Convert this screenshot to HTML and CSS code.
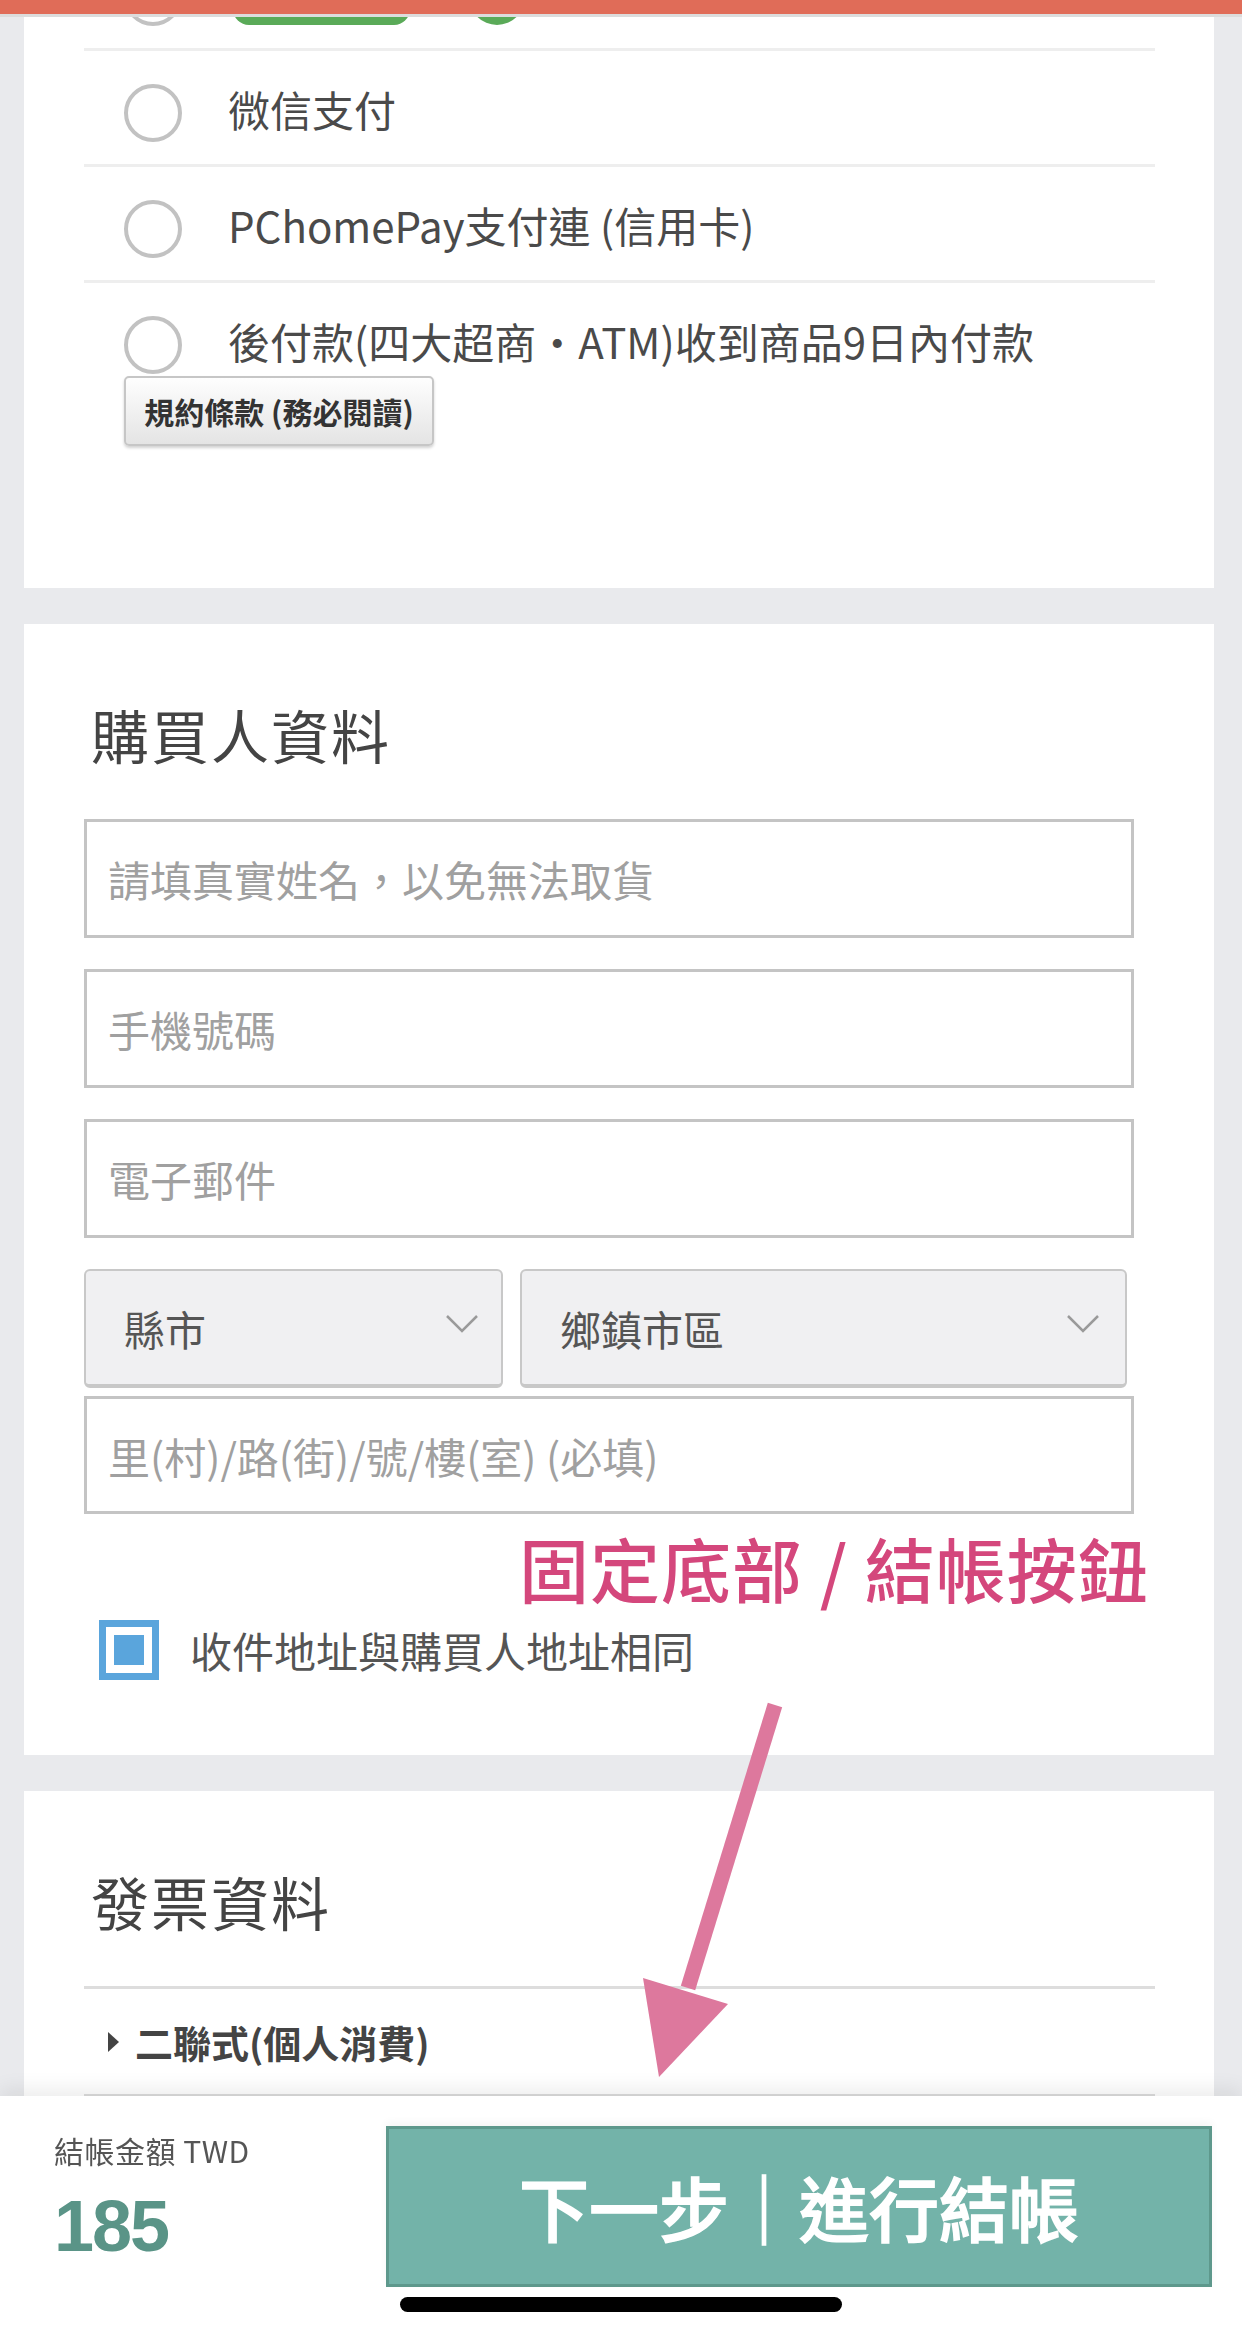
FILE: index.html
```html
<!DOCTYPE html>
<html lang="zh-Hant">
<head>
<meta charset="utf-8">
<title>結帳</title>
<link rel="stylesheet" href="styles.css">
</head>
<body>
<div class="statusbar"></div>

<main class="page">
  <section class="card card-pay">
    <div class="pay-list">
      <div class="pay-row">
        <span class="radio"></span>
        <span class="logo-pill"></span>
        <span class="logo-dot"></span>
      </div>
      <div class="pay-row">
        <span class="radio"></span>
        <span class="pay-label">微信支付</span>
      </div>
      <div class="pay-row">
        <span class="radio"></span>
        <span class="pay-label">PChomePay支付連 (信用卡)</span>
      </div>
      <div class="pay-row last">
        <span class="radio"></span>
        <span class="pay-label">後付款(四大超商・ATM)收到商品9日內付款</span>
      </div>
      <button class="terms-btn" type="button">規約條款 (務必閱讀)</button>
    </div>
  </section>

  <section class="card card-buyer">
    <h2 class="section-title">購買人資料</h2>
    <input class="field" type="text" placeholder="請填真實姓名，以免無法取貨">
    <input class="field" type="text" placeholder="手機號碼">
    <input class="field" type="text" placeholder="電子郵件">
    <div class="select-row">
      <div class="select select-city">
        <span>縣市</span>
        <svg class="chevron" viewBox="0 0 32 18" width="32" height="18"><path d="M1 1 L16 16 L31 1" fill="none" stroke="#9a9a9a" stroke-width="2.5"/></svg>
      </div>
      <div class="select select-town">
        <span>鄉鎮市區</span>
        <svg class="chevron" viewBox="0 0 32 18" width="32" height="18"><path d="M1 1 L16 16 L31 1" fill="none" stroke="#9a9a9a" stroke-width="2.5"/></svg>
      </div>
    </div>
    <input class="field field-address" type="text" placeholder="里(村)/路(街)/號/樓(室) (必填)">
    <div class="check-row">
      <span class="checkbox"><span class="checkbox-fill"></span></span>
      <span class="check-label">收件地址與購買人地址相同</span>
    </div>
  </section>

  <section class="card card-invoice">
    <h2 class="section-title">發票資料</h2>
    <div class="invoice-list">
      <div class="invoice-row">
        <span class="caret"></span>
        <span class="invoice-label">二聯式(個人消費)</span>
      </div>
    </div>
  </section>
</main>

<div class="annotation">固定底部 / 結帳按鈕</div>
<svg class="arrow" viewBox="0 0 170 400" width="170" height="400">
  <line x1="145" y1="15" x2="58" y2="298" stroke="#dd789d" stroke-width="15"/>
  <polygon points="13,288 98,314 29,387" fill="#dd789d"/>
</svg>

<footer class="checkout-bar">
  <div class="total">
    <div class="total-label">結帳金額 TWD</div>
    <div class="total-amount">185</div>
  </div>
  <button class="next-btn" type="button">下一步｜進行結帳</button>
  <div class="home-indicator"></div>
</footer>
</body>
</html>
```

FILE: styles.css
```css
html, body {
  margin: 0;
  padding: 0;
}

body {
  position: relative;
  width: 1242px;
  height: 2336px;
  overflow: hidden;
  background: #e9eaed;
  font-family: "Noto Sans CJK TC", "Noto Sans", sans-serif;
  color: #444;
}

.statusbar {
  position: fixed;
  top: 0;
  left: 0;
  width: 1242px;
  height: 14px;
  background: #e06c58;
  border-bottom: 3px solid #dcdcdc;
  z-index: 5;
}

.page {
  display: flow-root;
  padding: 0 28px 0 24px;
}

.card {
  background: #fff;
  margin-bottom: 36px;
}

/* payment card */
.card-pay {
  margin-top: -65px;
  padding: 0 59px 142px 60px;
}

.pay-row {
  display: flex;
  align-items: center;
  padding: 33px 0 22px 40px;
  border-bottom: 3px solid #eeeeee;
}

.pay-row.last {
  border-bottom: none;
  padding-bottom: 2px;
}

.radio {
  flex: none;
  width: 58px;
  height: 58px;
  box-sizing: border-box;
  border: 4px solid #c2c2c2;
  border-radius: 50%;
  margin-right: 46px;
}

.pay-label {
  margin-top: -9px;
  font-size: 42px;
  line-height: 58px;
  color: #4a4a4a;
  white-space: nowrap;
}

.logo-pill {
  width: 177px;
  height: 56px;
  margin-left: 5px;
  border-radius: 16px;
  background: #5aaa58;
}

.logo-dot {
  width: 56px;
  height: 56px;
  margin-left: 59px;
  border-radius: 50%;
  background: #5aaa58;
}

.terms-btn {
  display: flex;
  align-items: center;
  justify-content: center;
  margin-left: 40px;
  width: 310px;
  height: 70px;
  box-sizing: border-box;
  padding: 0;
  border: 2px solid #c6c6c6;
  border-radius: 5px;
  background: linear-gradient(#fefefe, #e4e4e4);
  box-shadow: 0 2px 3px rgba(0, 0, 0, 0.18);
  font-family: "Noto Sans CJK TC", "Noto Sans", sans-serif;
  font-size: 30px;
  font-weight: 700;
  color: #333;
  white-space: nowrap;
}

/* buyer card */
.card-buyer {
  padding: 81px 80px 75px 60px;
}

.section-title {
  margin: 0 0 56px;
  padding-left: 7px;
  font-size: 58px;
  line-height: 58px;
  font-weight: 400;
  letter-spacing: 2px;
  color: #444;
}

.field {
  display: block;
  width: 100%;
  height: 119px;
  box-sizing: border-box;
  margin: 0 0 31px;
  padding: 0 0 0 21px;
  border: 3px solid #c4c4c4;
  border-radius: 0;
  background: #fff;
  font-family: "Noto Sans CJK TC", "Noto Sans", sans-serif;
  font-size: 42px;
  color: #444;
  outline: none;
}

.field::placeholder {
  color: #a0a0a0;
}

.field-address {
  height: 118px;
  margin-bottom: 0;
}

.select-row {
  display: flex;
  gap: 17px;
  height: 119px;
  margin-bottom: 8px;
}

.select {
  display: flex;
  align-items: center;
  justify-content: space-between;
  box-sizing: border-box;
  padding: 0 23px 0 38px;
  border: 2px solid #c8c8c8;
  border-bottom-width: 4px;
  border-radius: 6px;
  background: #f0f0f2;
  font-size: 41px;
  color: #555;
}

.select-city {
  width: 419px;
}

.select-town {
  width: 607px;
  padding-right: 26px;
}

.chevron {
  display: block;
  margin-top: -8px;
}

.check-row {
  display: flex;
  align-items: center;
  margin-top: 106px;
  padding-left: 15px;
}

.checkbox {
  flex: none;
  width: 60px;
  height: 60px;
  box-sizing: border-box;
  border: 7px solid #5aa5dc;
  padding: 8px;
}

.checkbox-fill {
  display: block;
  width: 30px;
  height: 30px;
  background: #5aa5dc;
}

.check-label {
  margin-left: 31px;
  font-size: 42px;
  line-height: 60px;
  color: #555;
}

/* invoice card */
.card-invoice {
  padding: 81px 59px 300px 60px;
}

.invoice-list {
  border-top: 3px solid #dddddd;
}

.invoice-row {
  display: flex;
  align-items: center;
  height: 105px;
  padding-left: 24px;
  border-bottom: 3px solid #dddddd;
}

.caret {
  width: 0;
  height: 0;
  border-left: 11px solid #444;
  border-top: 10px solid transparent;
  border-bottom: 10px solid transparent;
}

.invoice-label {
  margin-left: 16px;
  font-size: 38px;
  font-weight: 700;
  color: #444;
}

/* annotation overlay */
.annotation {
  position: absolute;
  left: 519px;
  top: 1533px;
  font-size: 70px;
  line-height: 70px;
  font-weight: 500;
  letter-spacing: 1px;
  color: #d4477c;
  white-space: nowrap;
  z-index: 3;
}

.arrow {
  position: absolute;
  left: 630px;
  top: 1690px;
  z-index: 6;
}

/* fixed checkout bar */
.checkout-bar {
  position: fixed;
  left: 0;
  bottom: 0;
  width: 1242px;
  height: 240px;
  display: flex;
  background: #fff;
  box-shadow: 0 -8px 18px rgba(0, 0, 0, 0.07);
  z-index: 4;
}

.total {
  width: 332px;
  padding: 39px 0 0 54px;
}

.total-label {
  font-size: 30px;
  line-height: 30px;
  letter-spacing: 0.5px;
  color: #555;
  white-space: nowrap;
}

.total-amount {
  margin-top: 25px;
  font-family: "Liberation Sans", Arial, sans-serif;
  font-size: 72px;
  line-height: 72px;
  font-weight: 700;
  letter-spacing: -2px;
  color: #5a9487;
}

.next-btn {
  display: flex;
  align-items: center;
  justify-content: center;
  margin-top: 30px;
  width: 826px;
  height: 161px;
  box-sizing: border-box;
  padding: 0;
  border: 3px solid #5e988c;
  background: #73b3a9;
  box-shadow: 0 -4px 8px rgba(0, 0, 0, 0.04);
  font-family: "Noto Sans CJK TC", "Noto Sans", sans-serif;
  font-size: 70px;
  font-weight: 500;
  -webkit-text-stroke: 1.5px #fff;
  color: #fff;
  white-space: nowrap;
}

.home-indicator {
  position: absolute;
  left: 400px;
  bottom: 24px;
  width: 442px;
  height: 15px;
  border-radius: 8px;
  background: #000;
}
```
